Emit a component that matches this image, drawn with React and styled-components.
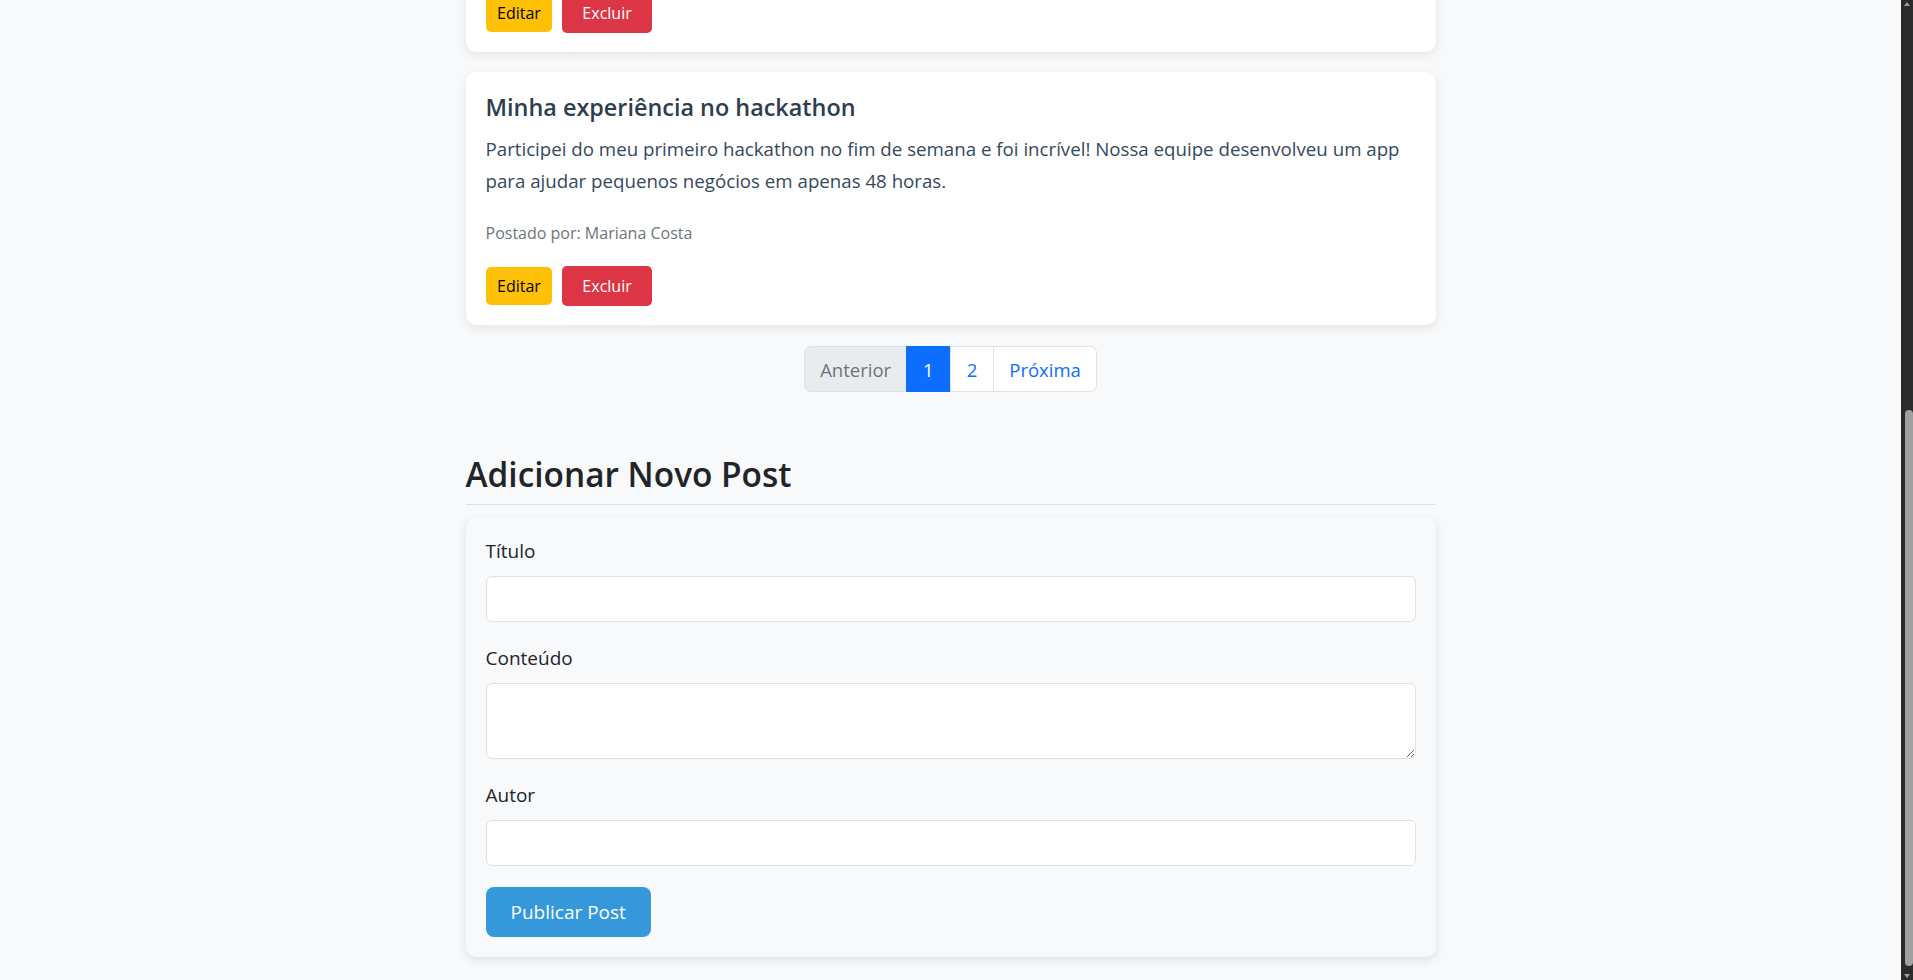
import React, { useEffect, useState } from "react";
import styled, { createGlobalStyle } from "styled-components";

const GlobalStyle = createGlobalStyle`
  html, body {
    margin: 0;
    padding: 0;
    background: #f8f9fa;
  }
  body {
    font-family: "Open Sans", "Noto Sans", sans-serif;
    color: #212529;
    padding-right: 12px;
  }
  * { box-sizing: border-box; }
`;

const Container = styled.div`
  max-width: 970px;
  margin: 0 auto;
  padding: 24px 0 23px;
`;

const PageHeader = styled.header`
  text-align: center;
  padding: 40px 0 75px;
`;

const PageTitle = styled.h1`
  font-size: 38px;
  font-weight: 600;
  margin: 0 0 10px;
  color: #2c3e50;
`;

const PageSubtitle = styled.p`
  font-size: 18px;
  color: #6c757d;
  margin: 0;
`;

const PostCard = styled.div`
  background: #fff;
  border-radius: 10px;
  padding: 20px 20px 19px;
  margin-bottom: 20px;
  box-shadow: 0 3px 10px rgba(0, 0, 0, 0.09);
`;

const PostTitle = styled.h3`
  font-size: 23.4px;
  font-weight: 600;
  line-height: 31px;
  color: #2c3e50;
  margin: 0 0 10px;
`;

const PostText = styled.p`
  font-size: 18.7px;
  line-height: 32px;
  color: #34495e;
  margin: 0 0 24px;
`;

const Meta = styled.small`
  display: block;
  font-size: 16px;
  line-height: 24px;
  color: #6c757d;
  margin-bottom: 21px;
`;

const Actions = styled.div`
  display: flex;
  align-items: center;
  gap: 10px;
`;

const Button = styled.button`
  font-family: inherit;
  font-size: 16px;
  line-height: 24px;
  border: none;
  border-radius: 5px;
  cursor: pointer;
  padding: ${({ $wide }) => ($wide ? "8px 20px" : "7px 11.5px")};
  background: ${({ $variant }) => ($variant === "danger" ? "#dc3545" : "#ffc107")};
  color: ${({ $variant }) => ($variant === "danger" ? "#fff" : "#000")};
`;

const Pagination = styled.ul`
  display: flex;
  justify-content: center;
  list-style: none;
  padding: 0;
  margin: 21px 0 0;
`;

const PageItem = styled.li`
  height: 46px;
  display: flex;
  align-items: center;
  padding: 0 ${({ $num }) => ($num ? "16px" : "15px")};
  font-size: 18.5px;
  border: 1px solid ${({ $active }) => ($active ? "#0d6efd" : "#dee2e6")};
  margin-left: -1px;
  background: ${({ $active, $disabled }) =>
    $active ? "#0d6efd" : $disabled ? "#e9ecef" : "#fff"};
  color: ${({ $active, $disabled }) =>
    $active ? "#fff" : $disabled ? "#6c757d" : "#0d6efd"};
  &:first-child {
    border-radius: 7px 0 0 7px;
    margin-left: 0;
  }
  &:last-child {
    border-radius: 0 7px 7px 0;
  }
`;

const SectionTitle = styled.h2`
  font-size: 33.4px;
  font-weight: 600;
  line-height: 40px;
  margin: 62px 0 0;
  padding-bottom: 10px;
  border-bottom: 1px solid #dee2e6;
  color: #212529;
`;

const FormCard = styled.form`
  background: #f8f9fa;
  border-radius: 10px;
  padding: 21px 20px 20px;
  margin-top: 12px;
  box-shadow: 0 3px 10px rgba(0, 0, 0, 0.1);
`;

const Field = styled.div`
  margin-bottom: ${({ $last }) => ($last ? "21px" : "23px")};
`;

const Label = styled.label`
  display: block;
  font-size: 19px;
  line-height: 26px;
  margin-bottom: 12px;
  color: #212529;
`;

const Input = styled.input`
  display: block;
  width: 100%;
  height: 46px;
  border: 1px solid #dee2e6;
  border-radius: 6px;
  background: #fff;
  font-family: inherit;
  font-size: 16px;
  padding: 6px 12px;
`;

const TextArea = styled.textarea`
  display: block;
  width: 100%;
  height: 76px;
  border: 1px solid #dee2e6;
  border-radius: 6px;
  background: #fff;
  font-family: inherit;
  font-size: 16px;
  padding: 6px 12px;
  resize: vertical;
`;

const SubmitButton = styled.button`
  font-family: inherit;
  font-size: 19px;
  line-height: 26px;
  padding: 12px 25px;
  border: none;
  border-radius: 8px;
  background: #3498db;
  color: #fff;
  cursor: pointer;
`;

/* window scrollbar, drawn because the browser hides its own */
const ScrollBar = styled.div`
  position: fixed;
  top: 0;
  right: 0;
  bottom: 0;
  width: 12px;
  background: #2b2b2b;
`;

const Arrow = styled.div`
  position: absolute;
  left: 3px;
  width: 0;
  height: 0;
  border-left: 3.5px solid transparent;
  border-right: 3.5px solid transparent;
  ${({ $down }) =>
    $down
      ? "bottom: 2px; border-top: 4px solid #9f9f9f;"
      : "top: 2px; border-bottom: 4px solid #9f9f9f;"}
`;

const Thumb = styled.div`
  position: absolute;
  left: 4px;
  right: 0;
  background: #a0a0a0;
  border-radius: 4px;
`;

const posts = [
  {
    id: 1,
    title: "Aprendendo React do zero",
    content:
      "Comecei a estudar React há algumas semanas e já consegui criar meus primeiros componentes. A documentação oficial ajuda muito no começo da jornada.",
    author: "João Silva",
  },
  {
    id: 2,
    title: "Dicas para estudar programação",
    content:
      "Estabeleça uma rotina, pratique todos os dias e não tenha medo de errar. Construir pequenos projetos é a melhor forma de fixar o conteúdo aprendido.",
    author: "Ana Souza",
  },
  {
    id: 3,
    title: "Minha experiência no hackathon",
    content:
      "Participei do meu primeiro hackathon no fim de semana e foi incrível! Nossa equipe desenvolveu um app para ajudar pequenos negócios em apenas 48 horas.",
    author: "Mariana Costa",
  },
];

const App = () => {
  const [thumb, setThumb] = useState({ top: 14, height: 0 });

  useEffect(() => {
    const doc = document.documentElement;
    window.scrollTo(0, doc.scrollHeight);
    const view = window.innerHeight;
    const track = view - 28;
    const total = doc.scrollHeight;
    setThumb({
      top: 14 + (window.scrollY / total) * track,
      height: (view / total) * track,
    });
  }, []);

  return (
    <>
      <GlobalStyle />
      <Container>
        <PageHeader>
          <PageTitle>Blog da Comunidade</PageTitle>
          <PageSubtitle>Compartilhe suas experiências com a turma</PageSubtitle>
        </PageHeader>

        {posts.map((post) => (
          <PostCard key={post.id}>
            <PostTitle>{post.title}</PostTitle>
            <PostText>{post.content}</PostText>
            <Meta>Postado por: {post.author}</Meta>
            <Actions>
              <Button type="button">Editar</Button>
              <Button type="button" $variant="danger" $wide>
                Excluir
              </Button>
            </Actions>
          </PostCard>
        ))}

        <Pagination>
          <PageItem $disabled>Anterior</PageItem>
          <PageItem $active $num>1</PageItem>
          <PageItem $num>2</PageItem>
          <PageItem>Próxima</PageItem>
        </Pagination>

        <SectionTitle>Adicionar Novo Post</SectionTitle>
        <FormCard onSubmit={(e) => e.preventDefault()}>
          <Field>
            <Label htmlFor="titulo">Título</Label>
            <Input id="titulo" type="text" />
          </Field>
          <Field>
            <Label htmlFor="conteudo">Conteúdo</Label>
            <TextArea id="conteudo" />
          </Field>
          <Field $last>
            <Label htmlFor="autor">Autor</Label>
            <Input id="autor" type="text" />
          </Field>
          <SubmitButton type="submit">Publicar Post</SubmitButton>
        </FormCard>
      </Container>

      <ScrollBar>
        <Arrow />
        <Thumb style={{ top: thumb.top, height: thumb.height }} />
        <Arrow $down />
      </ScrollBar>
    </>
  );
};

export default App;
